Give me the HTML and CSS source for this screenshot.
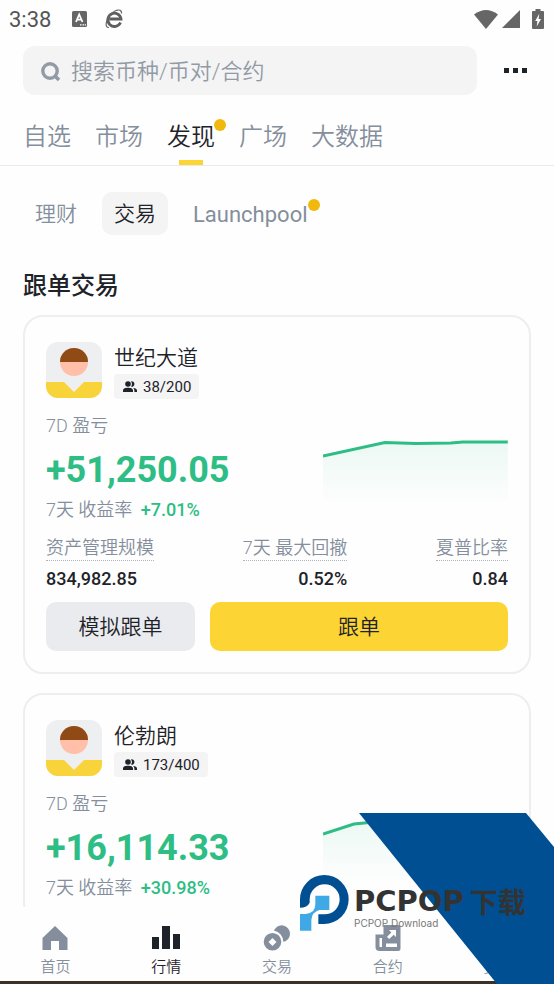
FILE: index.html
```html
<!DOCTYPE html>
<html lang="zh-CN">
<head>
<meta charset="utf-8">
<meta name="viewport" content="width=device-width, initial-scale=1">
<title>行情 - 发现</title>
<link rel="stylesheet" href="styles.css">
</head>
<body>
<svg class="defs" aria-hidden="true">
  <linearGradient id="fade" x1="0" y1="0" x2="0" y2="1"><stop offset="0" stop-color="#2ebd85" stop-opacity=".09"/><stop offset="1" stop-color="#2ebd85" stop-opacity="0"/></linearGradient>
  <symbol id="avatar" viewBox="0 0 56 56"><path fill="#eeeff1" d="M0 0h56v56H0z"/><path fill="#f8d33a" d="M0 40h18l10 10 10-10h18v16H0z"/><circle cx="28" cy="20" r="14" fill="#ffbfa9"/><path fill="#8f4a16" d="M14 20a14 14 0 0 1 28 0z"/></symbol>
  <symbol id="people" viewBox="0 0 14 11"><g fill="#1e2329"><circle cx="5" cy="3" r="2.8"/><path d="M0 11V9.500C0 7.500 2.500 6.800 5 6.800s5 .7 5 2.700V11zM8 .4a2.700 2.700 0 1 1 0 5.200c1.300-1.500 1.300-3.700 0-5.200zM10.200 7c2.200.3 3.800 1 3.800 2.600V11h-2.600V9.500c0-1-.4-1.800-1.200-2.500z"/></g></symbol>
</svg>
<header class="status">
  <span class="clock">3:38</span>
  <svg class="app-a" width="15" height="16" viewBox="0 0 15 16"><rect width="15" height="16" rx="1.500" fill="#666"/><path d="M4 11 7.200 3.500 10.500 11M5.200 8.600h4" fill="none" stroke="#fff" stroke-width="1.800"/><path d="M8 13.800h1.500m1 0H12m.7 0h1.300" stroke="#fff" stroke-width="1.200"/></svg>
  <svg width="19" height="20" viewBox="0 0 19 20"><path d="M15.500 13.500A6.600 6.600 0 1 1 16 10H4.500" fill="none" stroke="#5f5f5f" stroke-width="2.800"/><path d="M4 18.500C-1 19 1 10 6 5S17-.5 16.500 4.500" fill="none" stroke="#666" stroke-width="1.200"/></svg>
  <span class="space"></span>
  <svg width="24" height="19" viewBox="0 0 24 19"><path fill="#666" d="M0 4.500Q12-4.500 24 4.500L12 19z"/></svg>
  <svg class="signal" width="18" height="18" viewBox="0 0 18 18"><path fill="#666" d="M18 0v18H0z"/></svg>
  <svg class="battery" width="12" height="20" viewBox="0 0 12 20"><path fill="#666" d="M3.500 0h5v2H11q1 0 1 1v16q0 1-1 1H1q-1 0-1-1V3q0-1 1-1h2.500z"/><path fill="#fff" d="M7.300 4.800 3.200 12h2.200L4.700 17.500 9 10H6.600z"/></svg>
</header>
<div class="search-row">
  <label class="search">
    <svg width="20" height="20" viewBox="0 0 20 20"><circle cx="9" cy="9" r="7.200" fill="none" stroke="#929aa5" stroke-width="3.400"/><path d="m13.500 13.500 4.500 4.500" stroke="#929aa5" stroke-width="3.600"/></svg>
    <input type="search" placeholder="搜索币种/币对/合约" aria-label="搜索币种/币对/合约">
  </label>
  <button class="more" aria-label="更多"><i></i><i></i><i></i></button>
</div>
<nav class="tabs">
  <a href="#">自选</a><a href="#">市场</a><a href="#" class="active dot">发现</a><a href="#">广场</a><a href="#">大数据</a>
</nav>
<main>
  <nav class="chips">
    <a href="#">理财</a><a href="#" class="active">交易</a><a href="#" class="dot">Launchpool</a>
  </nav>
  <h1>跟单交易</h1>
  <article class="card">
    <div class="trader">
      <svg class="avatar"><use href="#avatar"/></svg>
      <div><h2>世纪大道</h2><span class="badge"><svg width="14" height="11"><use href="#people"/></svg>38/200</span></div>
    </div>
    <div class="performance">
      <div>
        <p class="muted">7D 盈亏</p>
        <p class="profit">+51,250.05</p>
        <p class="muted">7天 收益率 <b>+7.01%</b></p>
      </div>
      <svg class="chart" viewBox="0 0 185 68"><path fill="url(#fade)" d="M0 17 62 3l31 1 35-1 12-1h45v66H0z"/><path fill="none" stroke="#2ebd85" stroke-width="3" d="M0 17 62 3.500l31 1 35-.5 12-1h45"/></svg>
    </div>
    <dl class="stats">
      <div><dt>资产管理规模</dt><dd>834,982.85</dd></div>
      <div><dt>7天 最大回撤</dt><dd>0.52%</dd></div>
      <div><dt>夏普比率</dt><dd>0.84</dd></div>
    </dl>
    <div class="actions"><button>模拟跟单</button><button class="primary">跟单</button></div>
  </article>
  <article class="card">
    <div class="trader">
      <svg class="avatar"><use href="#avatar"/></svg>
      <div><h2>伦勃朗</h2><span class="badge"><svg width="14" height="11"><use href="#people"/></svg>173/400</span></div>
    </div>
    <div class="performance">
      <div>
        <p class="muted">7D 盈亏</p>
        <p class="profit">+16,114.33</p>
        <p class="muted">7天 收益率 <b>+30.98%</b></p>
      </div>
      <svg class="chart" viewBox="0 0 185 68"><path fill="url(#fade)" d="M0 17 31 7l31-3 123-2v66H0z"/><path fill="none" stroke="#2ebd85" stroke-width="3" d="M0 17 31 7l31-3 123-2"/></svg>
    </div>
  </article>
</main>
<nav class="bottom">
  <a href="#"><svg width="28" height="26" viewBox="0 0 28 26"><path fill="#848e9c" d="M14 1 26.500 13v12H18v-9h-8v9H1.500V13z"/></svg>首页</a>
  <a href="#" class="active"><svg width="28" height="26" viewBox="0 0 28 26"><path fill="#1e2329" d="M0 12h7v12H0zM10 1h8v23h-8zM21 9h7v15h-7z"/></svg>行情</a>
  <a href="#"><svg width="28" height="26" viewBox="0 0 28 26"><path fill="#848e9c" fill-rule="evenodd" d="M9.500 8a8.800 8.800 0 1 1 0 17.600 8.800 8.800 0 0 1 0-17.600zm0 5-4 4 4 4 4-4zM11 5.500a8.300 8.300 0 1 1 9.300 11.300A11.500 11.500 0 0 0 11 5.500z"/></svg>交易</a>
  <a href="#"><svg width="28" height="26" viewBox="0 0 28 26"><path fill="#848e9c" d="M9.500 0H24q2.500 0 2.500 2.500v21q0 2.500-2.500 2.500H5.500q-4 0-4-4V9.500h8z"/><path fill="#fff" d="M5.500 13h2.500v9H5.500zM12 18.500h11V22H12zM15 5h7v7l-2.300-2.300-4.500 4.300-2.200-2.200 4.400-4.400z"/></svg>合约</a>
  <a href="#"><svg width="28" height="26" viewBox="0 0 28 26"><path fill="#848e9c" d="M8 3h16v22H14z"/></svg>资金</a>
</nav>
<div class="system-bar"></div>
<aside class="watermark">
  <svg class="band" viewBox="0 0 195 171"><path fill="#004f92" d="M0 0h167l28 34v137h-57z"/></svg>
  <div class="brand">
    <svg width="50" height="56" viewBox="65 225 150 168"><path fill="#004f92" d="M68 323V298A73 73 0 0 1 214 298 74 74 0 0 1 140 372H123V343H142A45 45 0 1 0 97 298V308Q90 323 68 323Z"/><path fill="#3fa9e5" d="M114 287H156V330H126Q104 336 102 360V392H68V342H85Q114 340 114 312Z"/></svg>
    <div><strong>PCPOP<span>下载</span></strong><small>PCPOP Download</small></div>
  </div>
</aside>
</body>
</html>
```
FILE: styles.css
```css
* { box-sizing: border-box; }
body {
  margin: 0; height: 100vh; display: flex; flex-direction: column; position: relative; overflow: hidden;
  background: #fefefe; color: #1e2329; font-family: Roboto, "Noto Sans CJK SC", sans-serif; font-weight: 350;
}
h1, h2, p, dl, dd { margin: 0; }
a { color: inherit; text-decoration: none; }
svg { display: block; flex: none; }
button { border: 0; padding: 0; font: inherit; color: inherit; }
.defs { position: absolute; width: 0; height: 0; }

.status { display: flex; align-items: center; height: 38px; padding: 0 10px 0 9px; flex: none; }
.clock { font-size: 22px; font-weight: 400; color: #555; }
.app-a { margin: 0 18px 0 21px; }
.space { flex: 1; }
.signal { margin: 0 12px 0 4px; }

.search-row { display: flex; align-items: center; padding: 8px 23px 0; flex: none; }
.search { flex: 1; display: flex; align-items: center; gap: 10px; height: 49px; padding: 2px 18px 0; border-radius: 12px; background: #f4f4f4; }
.search input { flex: 1; min-width: 0; border: 0; padding: 0; background: none; outline: 0; font: inherit; font-size: 22px; color: #1e2329; }
.search input::placeholder { color: #929aa5; opacity: 1; }
.more { display: flex; gap: 4px; padding: 20px 4px; margin-left: 23px; background: none; }
.more i { width: 5px; height: 5px; background: #1e2329; }

.tabs { display: flex; gap: 24px; height: 71px; padding: 22px 23px 0; border-bottom: 1px solid #eaeaec; font-size: 24px; line-height: 40px; color: #848e9c; flex: none; }
.tabs a, .chips a { position: relative; }
.tabs .active { color: #1e2329; }
.tabs .active::after { content: ""; position: absolute; left: 12px; bottom: 0; width: 24px; height: 5px; background: #fcd535; }
.dot::before { content: ""; position: absolute; width: 12px; height: 12px; border-radius: 50%; background: #f0b90b; }
.tabs .dot::before { right: -11px; top: 2px; }
.chips .dot::before { right: 0; top: 7px; }

main { flex: 1; min-height: 0; overflow: hidden; padding: 26px 23px 0; }
.chips { display: flex; gap: 13px; height: 43px; font-size: 21px; line-height: 45px; color: #848e9c; }
.chips a { padding: 0 12px; border-radius: 10px; }
.chips .active { background: #f4f4f4; color: #1e2329; }
.chips .dot { font-weight: 400; font-size: 22px; }
h1 { margin: 33px 0 11px; font-size: 24px; line-height: 36px; font-weight: 500; }

.card { border: 2px solid #eeeef0; border-radius: 20px; padding: 25px 21px 21px; margin-bottom: 19px; }
.trader { display: flex; gap: 12px; }
.avatar { width: 56px; height: 56px; border-radius: 12px; }
h2 { font-size: 21px; line-height: 32px; font-weight: 350; }
.badge { display: inline-flex; align-items: center; gap: 6px; height: 25px; padding: 0 8px 0 9px; border-radius: 4px; background: #f4f4f4; font-size: 15px; font-weight: 400; vertical-align: top; }
.performance { display: flex; justify-content: space-between; align-items: center; gap: 20px; }
.muted { margin-top: 15px; font-size: 18px; line-height: 24px; color: #848e9c; }
.muted b { margin-left: 4px; font-weight: 500; color: #2ebd85; }
.profit { margin-top: 10px; font-size: 36px; line-height: 44px; font-weight: 700; color: #2ebd85; }
.profit + .muted { margin-top: 6px; }
.chart { width: 40%; margin-top: 24px; }
.stats { display: flex; justify-content: space-between; margin-top: 14px; }
.stats div { text-align: right; }
.stats div:first-child { text-align: left; }
dt { font-size: 18px; line-height: 24px; color: #848e9c; border-bottom: 1px dotted #aeb4bd; }
dd { margin-top: 8px; font-size: 18px; line-height: 20px; font-weight: 500; }
.actions { display: grid; grid-template-columns: 1fr 2fr; gap: 15px; margin-top: 13px; }
.actions button { height: 49px; padding-bottom: 3px; border-radius: 10px; background: #eaebef; font-size: 21px; }
.actions .primary { background: #fcd535; }

.bottom { flex: none; display: grid; grid-template-columns: repeat(5, 1fr); height: 74px; padding-top: 18px; background: #fefefe; font-size: 15px; line-height: 20px; color: #848e9c; }
.bottom a { display: flex; flex-direction: column; align-items: center; gap: 6px; }
.bottom .active { color: #1e2329; }
.system-bar { flex: none; height: 3px; background: #3a3128; }

.watermark { position: absolute; right: 0; bottom: 0; width: 255px; height: 171px; pointer-events: none; }
.band { position: absolute; right: 0; bottom: 0; width: 195px; height: 171px; }
.brand { position: absolute; left: 0; top: 62px; display: flex; gap: 5px; color: #333; white-space: nowrap; }
.brand div { padding-top: 10px; }
.brand strong { display: flex; font: 700 29px/32px "DejaVu Sans", sans-serif; }
.brand strong span { font-family: "Noto Sans CJK SC", sans-serif; font-size: 28px; margin-left: 6px; }
.brand small { display: block; font: 400 10px/12px Inter, sans-serif; color: #777; }
```
